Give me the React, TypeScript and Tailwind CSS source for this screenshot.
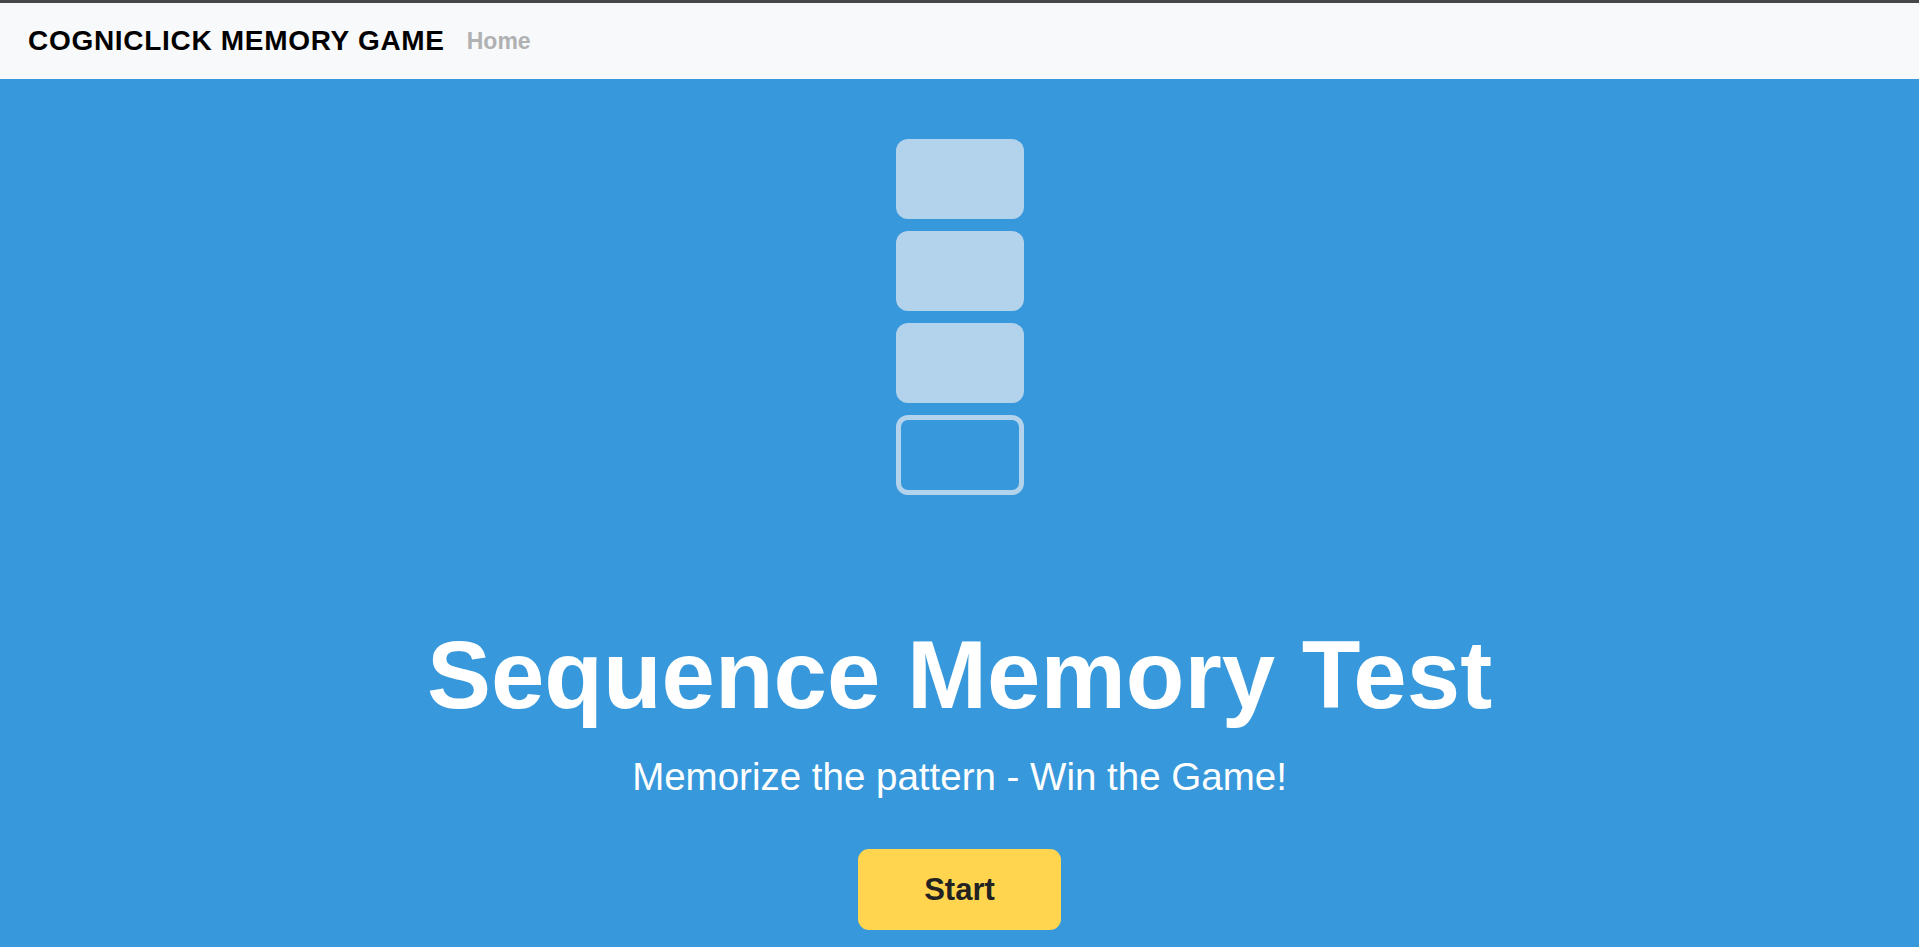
const Tile = ({ lit }: { lit: boolean }) => {
  if (lit) {
    return <div className="w-[128px] h-[80px] rounded-[12px] bg-[#b3d2eb]" />;
  }
  return (
    <div className="w-[128px] h-[80px] rounded-[12px] border-[5px] border-[#b3d2eb]" />
  );
};

const Navbar = () => {
  return (
    <div>
      <div className="h-[3px] bg-[#474747]" />
      <nav className="h-[76px] bg-[#f8f9fa] flex items-center px-[28px] gap-[22px]">
        <span className="text-[28px] leading-[32px] font-bold tracking-[0.7px] text-black">
          COGNICLICK MEMORY GAME
        </span>
        <a className="text-[23px] font-bold text-[#b0b1b2]">Home</a>
      </nav>
    </div>
  );
};

export default function App() {
  const tiles = [true, true, true, false];

  return (
    <div className="min-h-screen flex flex-col font-['Liberation_Sans',Arial,sans-serif]">
      <Navbar />

      <main className="flex-1 bg-[#3798db] flex flex-col items-center pt-[60px]">
        <div className="flex flex-col items-center gap-[12px]">
          {tiles.map((lit, i) => (
            <Tile key={i} lit={lit} />
          ))}
        </div>

        <h1 className="mt-[132px] text-[96px] leading-[96px] font-bold text-white">
          Sequence Memory Test
        </h1>
        <p className="mt-[30px] text-[38.5px] leading-[48px] text-white">
          Memorize the pattern - Win the Game!
        </p>

        <button className="mt-[48px] w-[203px] h-[81px] rounded-[11px] bg-[#ffd54f] text-[31px] leading-[36px] font-bold text-[#222222]">
          Start
        </button>
      </main>
    </div>
  );
}
